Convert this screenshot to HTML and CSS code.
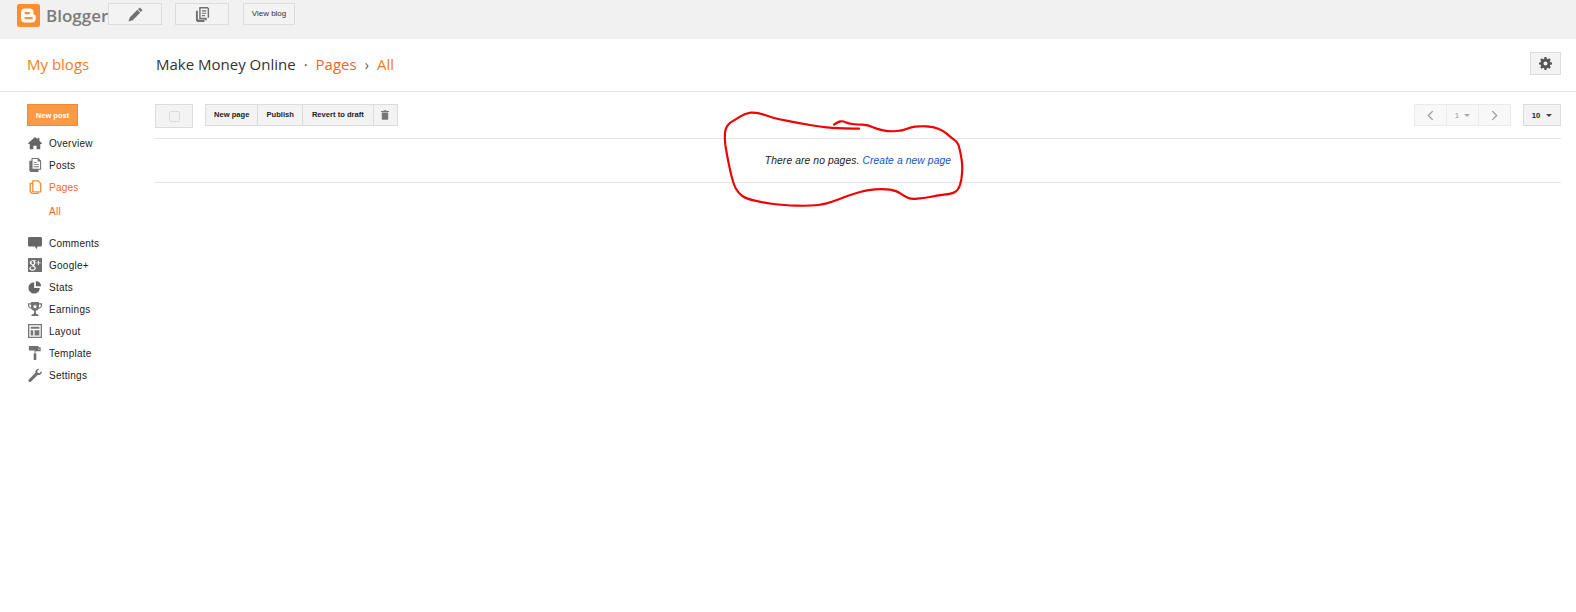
FILE: index.html
```html
<!DOCTYPE html>
<html lang="en">
<head>
<meta charset="utf-8">
<title>Blogger: Pages</title>
<link rel="stylesheet" href="styles.css">
</head>
<body>
<header class="topbar">
  <svg class="logo" viewBox="0 0 23 23"><rect width="23" height="23" rx="2.5" fill="#f98e32"/><path d="M8 4.500h4.500a4 4 0 0 1 4 4v1.200c0 .8.500 1 1.200 1.200.6.200 1 .6 1 1.400v2.200a4 4 0 0 1-4 4H8a4 4 0 0 1-4-4V8.500a4 4 0 0 1 4-4z" fill="#fff"/><path d="M8.500 8h3.500a1 1 0 0 1 0 2.200H8.500a1 1 0 0 1 0-2.200zM8.500 13h6.300a1 1 0 0 1 0 2.200H8.500a1 1 0 0 1 0-2.200z" fill="#f98e32"/></svg>
  <span class="wordmark">Blogger</span>
  <button class="topbtn wide"><svg class="ico-sm" viewBox="0 0 16 16"><path d="M12.500 .5l3 3-1.800 1.800-3-3zM10 3l3 3-8 8-4.500 1.500L2 11z" fill="#707070"/></svg></button>
  <button class="topbtn wide gap-a"><svg class="ico-sm" viewBox="0 0 16 16"><path fill-rule="evenodd" d="M4.500 0h9L15 1.500V11.500h-2.500V14H10v2H2.500L1 14.500V4h2v8.500l1 1h6.500V13H4.500zM6 1.500v10h7.500v-10zM7.500 3.500h4.500v1.300H7.500zM7.500 6h4.500v1.300H7.500zM7.500 8.500h3v1.300h-3z" fill="#707070"/></svg></button>
  <button class="topbtn view gap-b">View blog</button>
</header>

<section class="titlebar">
  <a class="myblogs">My blogs</a>
  <div class="crumbs"><span class="blogname">Make Money Online</span><span class="dot">·</span><span class="orange">Pages</span><span class="sep">›</span><span class="orange2">All</span></div>
  <button class="gear"><svg class="ico-gear" viewBox="0 0 16 16"><path fill="#555" fill-rule="evenodd" d="M6.800 0h2.400l.4 2.200 1.300.5L12.700 1.500l1.800 1.800-1.200 1.800.5 1.300 2.200.4v2.400l-2.200.4-.5 1.300 1.200 1.800-1.800 1.800-1.800-1.200-1.300.5-.4 2.200H6.800l-.4-2.200-1.300-.5-1.800 1.200-1.800-1.800 1.200-1.800-.5-1.300L0 9.200V6.800l2.200-.4.500-1.300-1.200-1.800 1.800-1.800 1.800 1.200 1.300-.5zM8 5.500a2.500 2.500 0 1 0 0 5 2.500 2.500 0 0 0 0-5z"/></svg></button>
</section>

<main class="layout">
  <nav class="sidebar">
    <button class="newpost">New post</button>
    <ul class="menu">
      <li class="item"><svg class="ico" viewBox="0 0 16 16"><path fill="#666" d="M8 1l3 2.700V2h2v3.500L16 8.200l-.8.800H14v6H9.800v-4H6.200v4H2V9H.8L0 8.200z"/></svg>Overview</li>
      <li class="item"><svg class="ico" viewBox="0 0 16 16"><path fill="#707070" fill-rule="evenodd" d="M4 0h8l3 3v10.500H12V16H3l-1.500-1.500V3H4zM5.200 1.200v11.200h8.600V4H11V1.200zM6.500 4.500H10v1H6.500zM6.500 7H12.500v1H6.500zM6.500 9.500H12.500v1H6.500z"/></svg>Posts</li>
      <li class="item active"><svg class="ico" viewBox="0 0 16 16"><path fill="none" stroke="#f98e32" stroke-width="1.500" d="M5.500 1h6l3 3v9.500h-9zM5 4H2.500v9.500L4.500 15.500h7V13.500"/></svg>Pages</li>
      <li class="item sub">All</li>
      <li class="item spaced"><svg class="ico" viewBox="0 0 16 16"><path fill="#666" d="M1.500 1h13A1.500 1.500 0 0 1 16 2.500v8a1.500 1.500 0 0 1-1.500 1.500H11l-1.500 3L8 12H1.500A1.500 1.500 0 0 1 0 10.500v-8A1.500 1.500 0 0 1 1.500 1z"/></svg>Comments</li>
      <li class="item"><svg class="ico" viewBox="0 0 16 16"><path fill="#707070" fill-rule="evenodd" d="M0 0h16v16H0zM11.500 3v2h-2v1h2v2h1V6h2V5h-2V3zM5.500 2.500C3.500 2.500 2 4 2 5.500S3.300 8 5 8c-.3.800 0 1 .3 1.400C3 9.500 1.500 10.500 1.500 12s1.700 2.500 3.700 2.500 3.800-1.200 3.800-3c0-1.800-2-2.300-2-3 0-.6 1.500-1 1.500-3 0-1-.5-1.500-1-2h1L9.500 2.500zM5.200 3.500c.9 0 1.500 1 1.500 2.200S6.200 7.200 5.500 7.200 4 6.100 4 5s.4-1.500 1.200-1.500zM5.500 10c1.200 0 2 .8 2 1.600s-.7 1.600-2.200 1.600-2.300-.7-2.300-1.600S4 10 5.500 10z"/></svg>Google+</li>
      <li class="item"><svg class="ico" viewBox="0 0 16 16"><path fill="#666" d="M7 2.500V9h6.500A6.500 6.500 0 1 1 7 2.500zM9 1a6.500 6.500 0 0 1 6 6H9z"/></svg>Stats</li>
      <li class="item"><svg class="ico" viewBox="0 0 16 16"><path fill="#707070" fill-rule="evenodd" d="M3.500 0h9v1.500H16V4c0 2-1.600 3.200-3.800 3.600C11.500 9 10 9.800 9 10v3l3 1.500V16H4v-1.500L7 13v-3c-1-.2-2.500-1-3.200-2.400C1.600 7.200 0 6 0 4V1.500h3.500zM1.300 2.800V4c0 1 .8 1.900 2.200 2.200V2.800zM12.500 2.800v3.400c1.400-.3 2.200-1.200 2.200-2.200V2.800zM8 2.500l.8 1.700 1.700.2-1.300 1.200.4 1.800L8 6.500l-1.600.9.400-1.800-1.300-1.200 1.700-.2z"/></svg>Earnings</li>
      <li class="item"><svg class="ico" viewBox="0 0 16 16"><path fill="#777" fill-rule="evenodd" d="M0 0h16v16H0zM1.500 1.500v13h13v-13zM3 3h10v2.500H3zM3 7h3v6H3zM7.500 7H13v6H7.500z"/></svg>Layout</li>
      <li class="item"><svg class="ico" viewBox="0 0 16 16"><path fill="#707070" d="M1 0h11v1.500H14.500V6H8.500v2.500H9.500V15.500a.5.500 0 0 1-.5.500H7a.5.500 0 0 1-.5-.5V8.500H7.500V4.500H13V3H12V5H1z"/></svg>Template</li>
      <li class="item"><svg class="ico" viewBox="0 0 16 16"><path fill="#707070" d="M15.500 3.500c.5 2-.5 4-2.500 4.500-.7.200-1.500.1-2-.100L3.500 15.500c-.7.700-1.800.700-2.500 0s-.7-1.800 0-2.500L8.500 5.500C8.200 4.500 8.500 3 9.500 2 10.500 1 12 .6 13 1L10.500 3.500 11 5.500 13 6z"/></svg>Settings</li>
    </ul>
  </nav>

  <div class="content">
    <div class="toolbar">
      <button class="selectall"><span class="box"></span></button>
      <div class="group">
        <button class="tbtn">New page</button>
        <button class="tbtn">Publish</button>
        <button class="tbtn revert">Revert to draft</button>
        <button class="tbtn trash"><svg class="ico-trash" viewBox="0 0 10 12"><path fill="#777" d="M3.500 0h3l.5 1h3v1.200H0V1h3zM1 3h8v8.200l-.8.800H1.800L1 11.200z"/></svg></button>
      </div>
      <div class="pager">
        <button class="pbtn prev"><svg class="chev" viewBox="0 0 8 12"><path fill="none" stroke="#999" stroke-width="1.400" d="M6.500 1L1.500 6l5 5"/></svg></button>
        <button class="pbtn num">1<span class="caret light"></span></button>
        <button class="pbtn next"><svg class="chev" viewBox="0 0 8 12"><path fill="none" stroke="#999" stroke-width="1.400" d="M1.500 1l5 5-5 5"/></svg></button>
      </div>
      <button class="size">10<span class="caret"></span></button>
    </div>
    <p class="empty"><em>There are no pages.</em> <a class="create">Create a new page</a></p>
  </div>
</main>

<svg class="scribble" viewBox="0 0 810 345"><path fill="none" stroke="#f00000" stroke-width="6.500" stroke-linecap="round" stroke-linejoin="round" d="M372 74Q385 65 392 64Q400 63 407 67Q415 71 427 72Q440 74 457 74Q475 75 487 81Q500 87 520 91Q540 95 559 93Q578 92 589 87Q600 82 615 80Q630 78 650 79Q670 80 685 86Q700 92 710 101Q720 110 732 119Q745 128 748 144Q752 160 755 180Q758 200 756 220Q755 240 750 255Q745 270 735 276Q725 282 702 284Q680 287 660 291Q640 295 622 296Q605 298 595 294Q585 290 572 281Q560 272 540 269Q520 266 495 268Q470 270 450 276Q430 282 410 289Q390 297 370 304Q350 312 325 315Q300 318 260 317Q220 316 190 312Q160 308 135 302Q110 297 97 288Q85 280 77 265Q70 250 65 230Q60 210 55 185Q50 160 46 135Q43 110 46 92Q50 75 62 67Q75 60 90 50Q105 40 122 38Q140 36 165 45Q190 55 225 61Q260 68 300 75Q340 82 360 83Q380 85 447 86"/></svg>
</body>
</html>
```

FILE: styles.css
```css
* { box-sizing: border-box; }
html, body { margin: 0; padding: 0; }
body {
  position: relative;
  width: 1576px;
  height: 612px;
  overflow: hidden;
  background: #fff;
  color: #222;
  font-family: "Liberation Sans", Arial, sans-serif;
}
button { margin: 0; padding: 0; font-family: inherit; cursor: default; }

.topbar {
  display: flex;
  align-items: flex-start;
  height: 39px;
  padding: 4px 0 0 17px;
  background: #f1f1f1;
}
.logo { width: 23px; height: 23px; flex: none; }
.wordmark {
  flex: none;
  margin-left: 6px;
  width: 62px;
  font: 600 17px/23px "Open Sans", sans-serif;
  color: #7b7b7b;
}
.topbtn {
  flex: none;
  height: 22px;
  margin-top: -1px;
  display: flex;
  align-items: center;
  justify-content: center;
  background: #f3f3f3;
  border: 1px solid #dcdcdc;
  font-size: 8px;
  color: #333;
}
.wide { width: 54px; }
.gap-a { margin-left: 13px; }
.gap-b { margin-left: 14px; }
.view { width: 52px; padding-bottom: 1px; }
.ico-sm { width: 15px; height: 15px; }

.titlebar {
  display: flex;
  align-items: center;
  height: 53px;
  padding: 0 15px 2px 27px;
  border-bottom: 1px solid #e5e5e5;
}
.myblogs { width: 129px; font: 15px "Open Sans", sans-serif; color: #f57d20; }
.crumbs { flex: 1; display: flex; align-items: center; font: 15px "Open Sans", sans-serif; }
.blogname { color: #333; }
.dot { margin: 0 8px; color: #555; }
.orange { color: #f0652f; }
.sep { margin: 0 8px; color: #555; font-size: 14px; }
.orange2 { color: #f57d20; }
.gear {
  width: 31px;
  height: 23px;
  display: flex;
  align-items: center;
  justify-content: center;
  margin-top: -1px;
  background: #f3f3f3;
  border: 1px solid #dcdcdc;
}
.ico-gear { width: 13px; height: 13px; }

.layout { display: flex; padding-top: 12px; }
.sidebar { width: 155px; flex: none; padding-left: 27px; }
.newpost {
  display: block;
  width: 51px;
  height: 22px;
  background: #fb9945;
  border: 1px solid #f08a35;
  color: #fff;
  font-size: 7.500px;
  font-weight: bold;
}
.menu { list-style: none; margin: 6px 0 0; padding: 0; }
.item {
  display: flex;
  align-items: center;
  height: 22px;
  font-size: 10px;
  letter-spacing: .25px;
  color: #222;
}
.ico { width: 14px; height: 14px; margin: 0 7px 0 1px; flex: none; }
.active { color: #f0652f; }
.sub { padding: 2px 0 0 22px; height: 24px; color: #f0652f; }
.spaced { margin-top: 10px; }

.content { flex: 1; padding-right: 15px; }
.toolbar {
  display: flex;
  align-items: flex-start;
  height: 35px;
  border-bottom: 1px solid #e5e5e5;
}
.selectall {
  width: 38px;
  height: 24px;
  display: flex;
  align-items: center;
  justify-content: center;
  background: #f3f3f3;
  border: 1px solid #dcdcdc;
}
.box { width: 11px; height: 11px; background: #f1f1f1; border: 1px solid #dcdcdc; border-radius: 2px; }
.group { display: flex; margin-left: 12px; flex: 1; }
.tbtn {
  height: 22px;
  padding: 0 8px 2px;
  margin-right: -1px;
  background: #f3f3f3;
  border: 1px solid #dcdcdc;
  font-size: 7.600px;
  font-weight: bold;
  color: #222;
}
.revert { padding: 0 9px 2px; }
.trash { width: 25px; display: flex; align-items: center; justify-content: center; padding: 0; }
.ico-trash { width: 8px; height: 10px; }
.pager { display: flex; }
.pbtn {
  height: 22px;
  width: 33px;
  margin-right: -1px;
  display: flex;
  align-items: center;
  justify-content: center;
  gap: 5px;
  background: #f8f8f8;
  border: 1px solid #ebebeb;
  font-size: 8px;
  color: #999;
}
.chev { width: 7px; height: 11px; }
.size {
  width: 38px;
  height: 22px;
  margin-left: 13px;
  display: flex;
  align-items: center;
  justify-content: center;
  gap: 6px;
  background: #f3f3f3;
  border: 1px solid #dcdcdc;
  font-size: 7.700px;
  font-weight: bold;
  color: #222;
}
.caret {
  width: 0;
  height: 0;
  border: 3px solid transparent;
  border-top: 3px solid #444;
  border-bottom: 0;
}
.caret.light { border-top-color: #aaa; }
.empty {
  margin: 0;
  height: 44px;
  line-height: 44px;
  text-align: center;
  font-size: 10.300px;
  letter-spacing: .1px;
  border-bottom: 1px solid #e5e5e5;
}
.create { font-style: italic; color: #1155cc; }

.scribble {
  position: absolute;
  left: 710px;
  top: 100px;
  width: 270px;
  height: 115px;
}
```
